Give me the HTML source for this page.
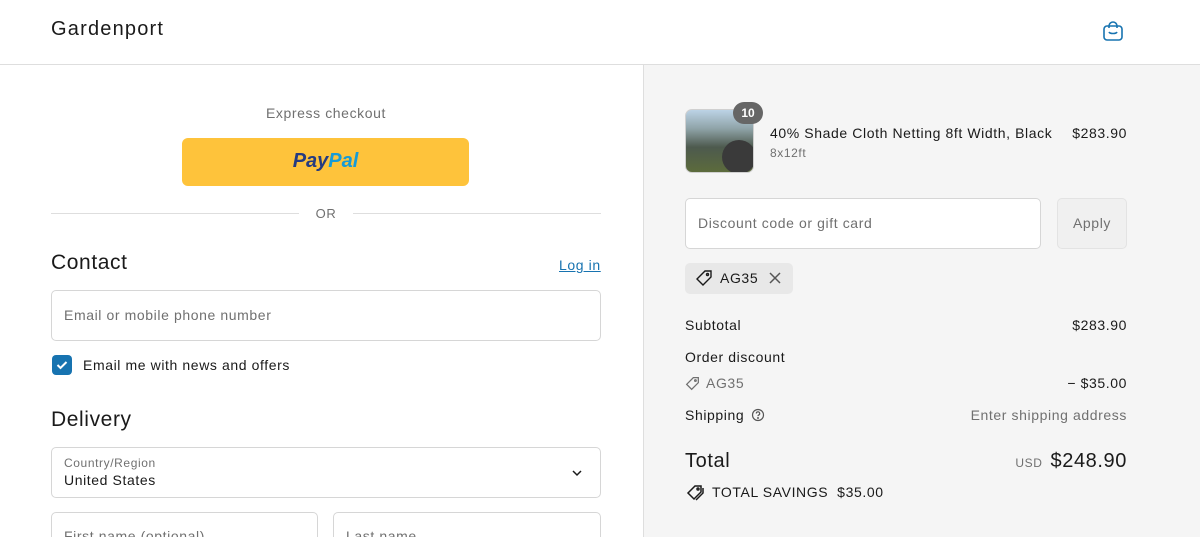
<!DOCTYPE html>
<html style="overflow:hidden"><head><meta charset="utf-8"><style>
*{box-sizing:border-box;margin:0;padding:0}
html,body{width:1200px;height:537px;overflow:hidden}
body{font-family:"Liberation Sans",Arial,sans-serif;color:#1a1a1a;background:#fff;position:relative;font-size:14px;letter-spacing:.6px}
.abs{position:absolute;white-space:nowrap}
.hdr{left:0;top:0;width:1200px;height:65px;border-bottom:1px solid #dedede}
.right{left:643px;top:65px;width:557px;height:472px;background:#f5f5f5;border-left:1px solid #dedede}
.inp{border:1px solid #d6d6d6;border-radius:5px;background:#fff}
.ph{color:#707070;font-size:14px}
.r{right:73px;text-align:right}
</style></head><body>
<div class="abs hdr"></div>
<div class="abs" style="left:51px;top:18px;font-size:20px;letter-spacing:1.2px">Gardenport</div>
<svg class="abs" style="left:1102px;top:20px" width="22" height="22" viewBox="0 0 22 22" fill="none" stroke="#1773b0" stroke-width="1.6"><rect x="2" y="6" width="18" height="14" rx="3"/><path d="M7 8V6a4 4 0 0 1 8 0v2"/><path d="M7 12c1 2 7 2 8 0"/></svg>

<div class="abs" style="left:0;top:105px;width:652px;text-align:center;color:#707070;font-size:14px">Express checkout</div>
<div class="abs" style="left:182px;top:138px;width:287px;height:48px;background:#fec33b;border-radius:6px;text-align:center;line-height:46px;font-weight:bold;font-style:italic;font-size:20px;letter-spacing:0"><span style="color:#253b80">Pay</span><span style="color:#179bd7">Pal</span></div>
<div class="abs" style="left:51px;top:213px;width:248px;border-top:1px solid #dedede"></div>
<div class="abs" style="left:353px;top:213px;width:248px;border-top:1px solid #dedede"></div>
<div class="abs" style="left:300px;top:206px;width:52px;text-align:center;color:#707070;font-size:13px">OR</div>

<div class="abs" style="left:51px;top:251px;font-size:21px">Contact</div>
<div class="abs" style="left:559px;top:257px;color:#1773b0;text-decoration:underline;font-size:14px">Log in</div>
<div class="abs inp" style="left:51px;top:290px;width:550px;height:51px"></div>
<div class="abs ph" style="left:64px;top:307px">Email or mobile phone number</div>
<div class="abs" style="left:52px;top:355px;width:20px;height:20px;background:#1773b0;border-radius:4px"></div>
<svg class="abs" style="left:55px;top:358px" width="14" height="14" viewBox="0 0 14 14" fill="none" stroke="#fff" stroke-width="2"><path d="M2.5 7l3 3 6-6"/></svg>
<div class="abs" style="left:83px;top:357px;font-size:14px">Email me with news and offers</div>

<div class="abs" style="left:51px;top:408px;font-size:21px">Delivery</div>
<div class="abs inp" style="left:51px;top:447px;width:550px;height:51px"></div>
<div class="abs" style="left:64px;top:456px;font-size:12px;color:#707070">Country/Region</div>
<div class="abs" style="left:64px;top:472px;font-size:14px">United States</div>
<svg class="abs" style="left:571px;top:467px" width="12" height="12" viewBox="0 0 12 12" fill="none" stroke="#1a1a1a" stroke-width="1.5"><path d="M2 4l4 4 4-4"/></svg>
<div class="abs inp" style="left:51px;top:512px;width:267px;height:51px"></div>
<div class="abs ph" style="left:64px;top:528px">First name (optional)</div>
<div class="abs inp" style="left:333px;top:512px;width:268px;height:51px"></div>
<div class="abs ph" style="left:346px;top:528px">Last name</div>

<div class="abs right"></div>
<div class="abs" style="left:685px;top:109px;width:69px;height:64px;border-radius:7px;overflow:hidden;background:linear-gradient(180deg,#bcd3e6 0%,#8fa3a8 30%,#4d5a4e 60%,#5c6b3c 100%);border:1px solid #d0d0d0"><div style="position:absolute;left:36px;top:30px;width:34px;height:34px;border-radius:50%;background:#3a3a3a"></div></div>
<div class="abs" style="left:733px;top:102px;width:30px;height:22px;border-radius:11px;background:#666;color:#fff;font-weight:bold;font-size:12px;text-align:center;line-height:22px;letter-spacing:0">10</div>
<div class="abs" style="left:770px;top:125px;font-size:14px">40% Shade Cloth Netting 8ft Width, Black</div>
<div class="abs" style="left:770px;top:146px;font-size:12px;color:#707070">8x12ft</div>
<div class="abs r" style="top:125px">$283.90</div>

<div class="abs inp" style="left:685px;top:198px;width:356px;height:51px"></div>
<div class="abs ph" style="left:698px;top:215px">Discount code or gift card</div>
<div class="abs" style="left:1057px;top:198px;width:70px;height:51px;border:1px solid #e3e3e3;border-radius:5px;background:#f0f0f0;color:#707070;text-align:center;line-height:49px">Apply</div>

<div class="abs" style="left:685px;top:263px;width:108px;height:31px;border-radius:5px;background:#e8e8e8"></div>
<svg class="abs" style="left:695px;top:269px" width="18" height="18" viewBox="0 0 18 18" fill="none" stroke="#1a1a1a" stroke-width="1.4"><path d="M10 2h6v6l-8 8-6-6z"/><circle cx="12.5" cy="5.5" r="1"/></svg>
<div class="abs" style="left:720px;top:270px;font-size:14px">AG35</div>
<svg class="abs" style="left:768px;top:271px" width="14" height="14" viewBox="0 0 14 14" stroke="#555" stroke-width="1.5"><path d="M2 2l10 10M12 2L2 12"/></svg>

<div class="abs" style="left:685px;top:317px">Subtotal</div>
<div class="abs r" style="top:317px">$283.90</div>
<div class="abs" style="left:685px;top:349px">Order discount</div>
<svg class="abs" style="left:685px;top:376px" width="15" height="15" viewBox="0 0 18 18" fill="none" stroke="#707070" stroke-width="1.5"><path d="M10 2h6v6l-8 8-6-6z"/><circle cx="12.5" cy="5.5" r="1"/></svg>
<div class="abs" style="left:706px;top:375px;color:#707070">AG35</div>
<div class="abs r" style="top:375px">− $35.00</div>
<div class="abs" style="left:685px;top:407px">Shipping</div>
<svg class="abs" style="left:751px;top:408px" width="14" height="14" viewBox="0 0 14 14" fill="none" stroke="#555" stroke-width="1.2"><circle cx="7" cy="7" r="5.5"/><path d="M5.3 5.5a1.7 1.7 0 1 1 2.3 1.6c-.5.2-.6.5-.6 1"/><circle cx="7" cy="10" r=".4"/></svg>
<div class="abs r" style="top:407px;color:#707070">Enter shipping address</div>

<div class="abs" style="left:685px;top:450px;font-size:20px">Total</div>
<div class="abs r" style="top:450px;font-size:20px"><span style="font-size:12px;color:#707070;margin-right:8px">USD</span>$248.90</div>
<svg class="abs" style="left:686px;top:484px" width="20" height="17" viewBox="0 0 20 17" fill="none" stroke="#1a1a1a" stroke-width="1.5"><path d="M9 2h6v6l-7 7-6-6z"/><path d="M17 4v5l-7 7"/><circle cx="12" cy="5" r="1"/></svg>
<div class="abs" style="left:712px;top:484px;font-size:14px">TOTAL SAVINGS&nbsp; $35.00</div>
</body></html>
